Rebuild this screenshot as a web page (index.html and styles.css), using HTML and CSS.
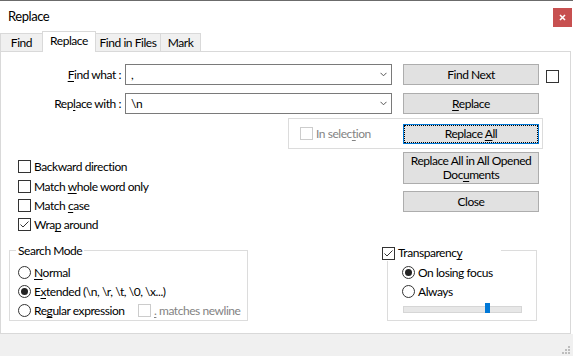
FILE: index.html
```html
<!DOCTYPE html>
<html>
<head>
<meta charset="utf-8">
<link rel="stylesheet" href="styles.css">
</head>
<body>
<div class="window">
  <div class="titlebar">
    <span class="title">Replace</span>
    <div class="close"><svg width="7" height="7" viewBox="0 0 7 7"><path d="M1 1 L6 6 M6 1 L1 6" stroke="#fff" stroke-width="1.6"/></svg></div>
  </div>
  <div class="tabs">
    <div class="tab t-find">Find</div>
    <div class="tab t-replace active">Replace</div>
    <div class="tab t-files">Find in Files</div>
    <div class="tab t-mark">Mark</div>
  </div>
  <div class="panel">
    <div class="row r1">
      <span class="lbl"><u>F</u>ind what :</span>
      <div class="combo"><span>,</span><svg class="chev" width="7" height="5" viewBox="0 0 7 5"><path d="M0.5 0.8 L3.5 3.8 L6.5 0.8" fill="none" stroke="#555" stroke-width="1"/></svg></div>
      <div class="btn"><span>Find Next</span></div>
      <span class="cb mini"></span>
    </div>
    <div class="row r2">
      <span class="lbl">Rep<u>l</u>ace with :</span>
      <div class="combo"><span>\n</span><svg class="chev" width="7" height="5" viewBox="0 0 7 5"><path d="M0.5 0.8 L3.5 3.8 L6.5 0.8" fill="none" stroke="#555" stroke-width="1"/></svg></div>
      <div class="btn"><span><u>R</u>eplace</span></div>
    </div>
    <div class="selgroup">
      <span class="cb disabled"></span>
      <span class="dis">In selec<u>t</u>ion</span>
      <div class="btn focus"><span>Replace <u>A</u>ll</span></div>
    </div>
    <div class="mid">
      <div class="checks">
        <div class="opt"><span class="cb"></span><span class="txt">Backward direction</span></div>
        <div class="opt tall"><span class="cb"></span><span class="txt">Match <u>w</u>hole word only</span></div>
        <div class="opt"><span class="cb"></span><span class="txt">Match <u>c</u>ase</span></div>
        <div class="opt"><span class="cb"><svg width="11" height="11" viewBox="0 0 11 11"><path d="M1.5 5.5 L4 8 L9.5 2.5" fill="none" stroke="#333" stroke-width="1"/></svg></span><span class="txt">Wra<u>p</u> around</span></div>
      </div>
      <div class="midbtns">
        <div class="btn tallbtn"><span>Replace All in All Opened<br>Doc<u>u</u>ments</span></div>
        <div class="btn"><span>Close</span></div>
      </div>
    </div>
    <div class="bottom">
      <div class="group search">
        <div class="gtitle">Search Mode</div>
        <div class="opt"><span class="rb"></span><span class="txt"><u>N</u>ormal</span></div>
        <div class="opt"><span class="rb on"></span><span class="txt">E<u>x</u>tended (\n, \r, \t, \0, \x...)</span></div>
        <div class="opt"><span class="rb"></span><span class="txt regex">Re<u>g</u>ular expression</span><span class="cb disabled"></span><span class="dis"><u>.</u> matches newline</span></div>
      </div>
      <div class="group transp">
        <div class="gtitle cbtitle"><span class="cb"><svg width="11" height="11" viewBox="0 0 11 11"><path d="M1.5 5.5 L4 8 L9.5 2.5" fill="none" stroke="#333" stroke-width="1"/></svg></span><span class="txt">Transparenc<u>y</u></span></div>
        <div class="opt"><span class="rb on"></span><span class="txt">On losing focus</span></div>
        <div class="opt"><span class="rb"></span><span class="txt">Always</span></div>
        <div class="slider"><span class="thumb"></span></div>
      </div>
    </div>
  </div>
  <div class="footer">
    <svg class="grip" width="10" height="10" viewBox="0 0 10 10">
      <rect x="7" y="1" width="2" height="2" fill="#bdbdbd"/>
      <rect x="4" y="4" width="2" height="2" fill="#bdbdbd"/>
      <rect x="7" y="4" width="2" height="2" fill="#bdbdbd"/>
      <rect x="1" y="7" width="2" height="2" fill="#bdbdbd"/>
      <rect x="4" y="7" width="2" height="2" fill="#bdbdbd"/>
      <rect x="7" y="7" width="2" height="2" fill="#bdbdbd"/>
    </svg>
  </div>
</div>
</body>
</html>
```
FILE: styles.css
```css
* { box-sizing: border-box; }
body {
  margin: 0;
  font-family: Lato, "Noto Sans", sans-serif;
  font-size: 12px;
  letter-spacing: -0.45px;
  color: #000;
  background: #fff;
}
u { text-decoration: underline; text-underline-offset: 2px; }

.window {
  width: 573px;
  height: 356px;
  border-top: 1px solid #6b6b6b;
  background: #fff;
  display: flex;
  flex-direction: column;
}

.titlebar {
  height: 30px;
  flex: none;
  display: flex;
  justify-content: space-between;
  align-items: flex-start;
}
.title {
  font-size: 13px;
  line-height: 16px;
  margin: 7px 0 0 8px;
}
.close {
  width: 19px;
  height: 19px;
  margin: 7px 1px 0 0;
  background: #c75050;
  display: flex;
  align-items: center;
  justify-content: center;
}

.tabs {
  height: 20px;
  flex: none;
  display: flex;
  align-items: flex-end;
  position: relative;
  z-index: 2;
}
.tab {
  height: 18px;
  border: 1px solid #d9d9d9;
  border-bottom: 0;
  background: #f0f0f0;
  margin-left: -1px;
  text-align: center;
  line-height: 16px;
  padding-top: 1px;
  white-space: nowrap;
}
.tab.t-find { margin-left: 0; width: 43px; }
.tab.t-replace { width: 54px; }
.tab.t-files { width: 66px; }
.tab.t-mark { width: 41px; }
.tab.active {
  height: 21px;
  margin-bottom: -1px;
  background: #fff;
  position: relative;
  z-index: 3;
  padding-top: 1px;
}

.panel {
  width: 571px;
  height: 283px;
  flex: none;
  border: 1px solid #d9d9d9;
  display: flex;
  flex-direction: column;
  background: #fff;
}

.row { display: flex; align-items: center; height: 21px; }
.r1 { margin-top: 12px; }
.r2 { margin-top: 8px; }
.lbl { width: 120px; text-align: right; margin-right: 4px; }
.combo {
  width: 267px;
  height: 21px;
  border: 1px solid #7a7a7a;
  display: flex;
  align-items: center;
  padding-left: 5px;
}
.chev { margin-left: auto; margin-right: 4px; }

.btn {
  width: 136px;
  height: 21px;
  flex: none;
  background: #e1e1e1;
  border: 1px solid #adadad;
  display: flex;
  align-items: center;
  justify-content: center;
  text-align: center;
  line-height: 14px;
  white-space: nowrap;
}
.row .btn { margin-left: 11px; }
.btn.focus {
  border-color: #0078d7;
  outline: 1px dotted #000;
  outline-offset: -2px;
  height: 20px;
  margin-left: auto;
}

.cb {
  width: 13px;
  height: 13px;
  flex: none;
  border: 1px solid #333;
  background: #fff;
  display: inline-flex;
  align-items: center;
  justify-content: center;
}
.cb.mini { margin-left: 7px; align-self: flex-start; margin-top: 6px; }
.cb.disabled { border-color: #cccccc; }
.dis { color: #838383; margin-left: 3px; white-space: nowrap; }

.selgroup {
  margin: 4px 0 0 287px;
  width: 255px;
  height: 31px;
  border: 1px solid #dcdcdc;
  display: flex;
  align-items: center;
  padding: 0 3px 0 11px;
}

.mid {
  display: grid;
  grid-template-columns: 402px 136px;
  align-items: start;
}
.checks { padding: 8px 0 0 17px; }
.opt { display: flex; align-items: center; height: 19px; }
.checks .opt.tall { height: 20px; }
.txt { margin-left: 3px; white-space: nowrap; }
.midbtns {
  display: flex;
  flex-direction: column;
  gap: 7px;
  padding-top: 3px;
}
.btn.tallbtn { height: 32px; }

.bottom {
  display: flex;
  margin-top: 16px;
}
.group {
  height: 71px;
  flex: none;
  border: 1px solid #dcdcdc;
  display: flex;
  flex-direction: column;
  align-items: flex-start;
}
.group.search { margin-left: 8px; width: 239px; padding-left: 8px; }
.group.transp { margin-left: 139px; width: 150px; padding-left: 14px; }
.gtitle {
  line-height: 16px;
  height: 16px;
  background: #fff;
  margin: -8px 0 4px -2px;
  padding: 0 2px;
}
.cbtitle {
  display: flex;
  align-items: center;
  width: 119px;
  margin: -6px 0 2px -20px;
  padding: 0;
}
.regex { width: 104px; }

.rb {
  width: 13px;
  height: 13px;
  flex: none;
  border: 1px solid #333;
  border-radius: 50%;
  background: #fff;
  display: inline-flex;
  align-items: center;
  justify-content: center;
}
.rb.on::after {
  content: "";
  width: 7px;
  height: 7px;
  border-radius: 50%;
  background: #222;
}

.slider {
  position: relative;
  width: 119px;
  height: 10px;
  margin: 2px 0 0 1px;
}
.slider::before {
  content: "";
  position: absolute;
  left: 0;
  right: 0;
  top: 3px;
  height: 5px;
  background: #e7e7e7;
  border: 1px solid #d6d6d6;
}
.thumb {
  position: absolute;
  left: 82px;
  top: 0;
  width: 5px;
  height: 10px;
  background: #0078d7;
}

.footer {
  flex: 1;
  background: #f0f0f0;
  display: flex;
  justify-content: flex-end;
  align-items: flex-end;
}
.grip { margin: 0 2px 1px 0; }
```
